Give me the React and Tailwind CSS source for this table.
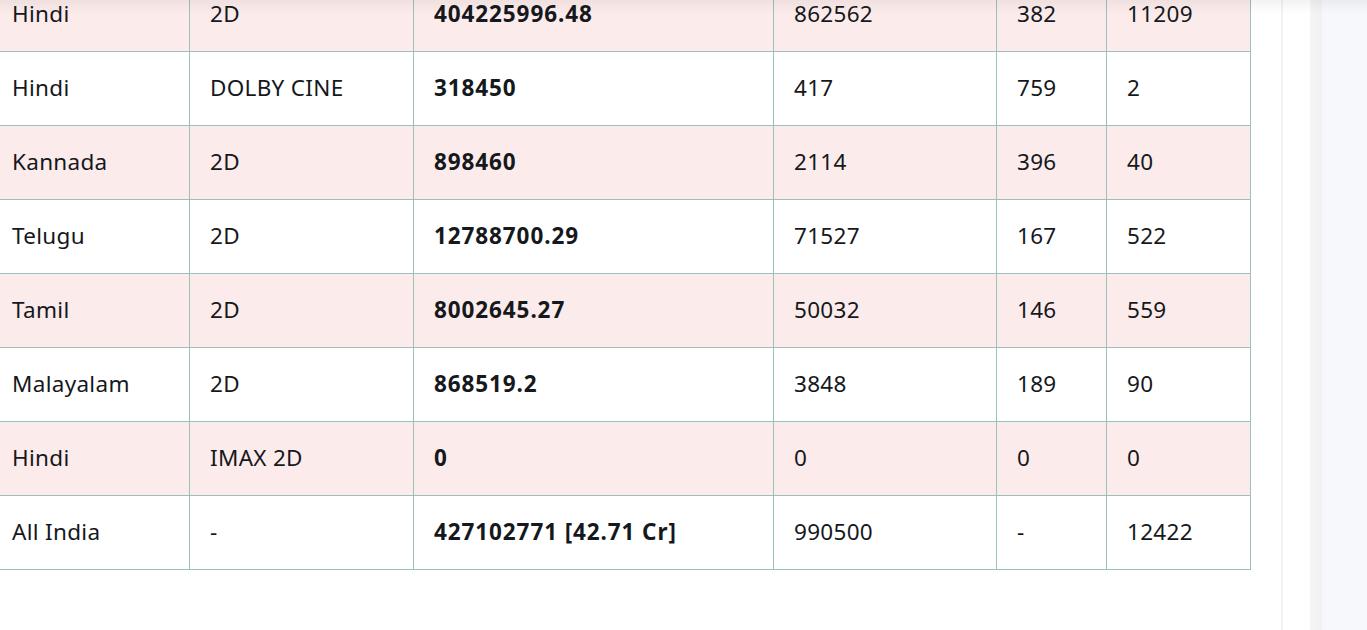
const ROWS = [
  { lang: 'Hindi', format: '2D', gross: '404225996.48', a: '862562', b: '382', c: '11209' },
  { lang: 'Hindi', format: 'DOLBY CINE', gross: '318450', a: '417', b: '759', c: '2' },
  { lang: 'Kannada', format: '2D', gross: '898460', a: '2114', b: '396', c: '40' },
  { lang: 'Telugu', format: '2D', gross: '12788700.29', a: '71527', b: '167', c: '522' },
  { lang: 'Tamil', format: '2D', gross: '8002645.27', a: '50032', b: '146', c: '559' },
  { lang: 'Malayalam', format: '2D', gross: '868519.2', a: '3848', b: '189', c: '90' },
  { lang: 'Hindi', format: 'IMAX 2D', gross: '0', a: '0', b: '0', c: '0' },
  { lang: 'All India', format: '-', gross: '427102771 [42.71 Cr]', a: '990500', b: '-', c: '12422' },
];

const cell = 'border border-[#9cc0bc] h-[74px] px-5 align-middle';

export default function App() {
  return (
    <div className="relative flex h-[630px] w-[1367px] overflow-hidden bg-white text-[#15181c]" style={{ fontFamily: '"Noto Sans", "Open Sans", sans-serif' }}>
      {/* faint header shadow at the top */}
      <div className="pointer-events-none absolute inset-x-0 top-0 h-[14px] bg-gradient-to-b from-black/[0.05] to-transparent" />

      <div className="w-[1281px] shrink-0 overflow-hidden">
        <table className="ml-[-10px] mt-[-23px] border-collapse text-[22.5px] leading-none tracking-[0.3px]">
          <colgroup>
            <col className="w-[199px]" />
            <col className="w-[224px]" />
            <col className="w-[360px]" />
            <col className="w-[223px]" />
            <col className="w-[110px]" />
            <col className="w-[144px]" />
          </colgroup>
          <tbody>
            {ROWS.map((r, i) => (
              <tr key={i} className={i % 2 === 0 && i < 7 ? 'bg-[#fcebeb]' : 'bg-white'}>
                <td className={`${cell} pl-[21px]`}>{r.lang}</td>
                <td className={cell}>{r.format}</td>
                <td className={`${cell} font-bold tracking-[0.9px]`}>{r.gross}</td>
                <td className={cell}>{r.a}</td>
                <td className={cell}>{r.b}</td>
                <td className={cell}>{r.c}</td>
              </tr>
            ))}
          </tbody>
        </table>
      </div>

      {/* right gutter */}
      <div className="w-[2px] shrink-0 bg-[#f2f2f3]" />
      <div className="w-[27px] shrink-0 bg-white" />
      <div className="w-[12px] shrink-0 bg-gradient-to-r from-[#f5f5f6] to-[#f1f1f3]" />
      <div className="flex-1 bg-[#f7f8fc]" />
    </div>
  );
}
